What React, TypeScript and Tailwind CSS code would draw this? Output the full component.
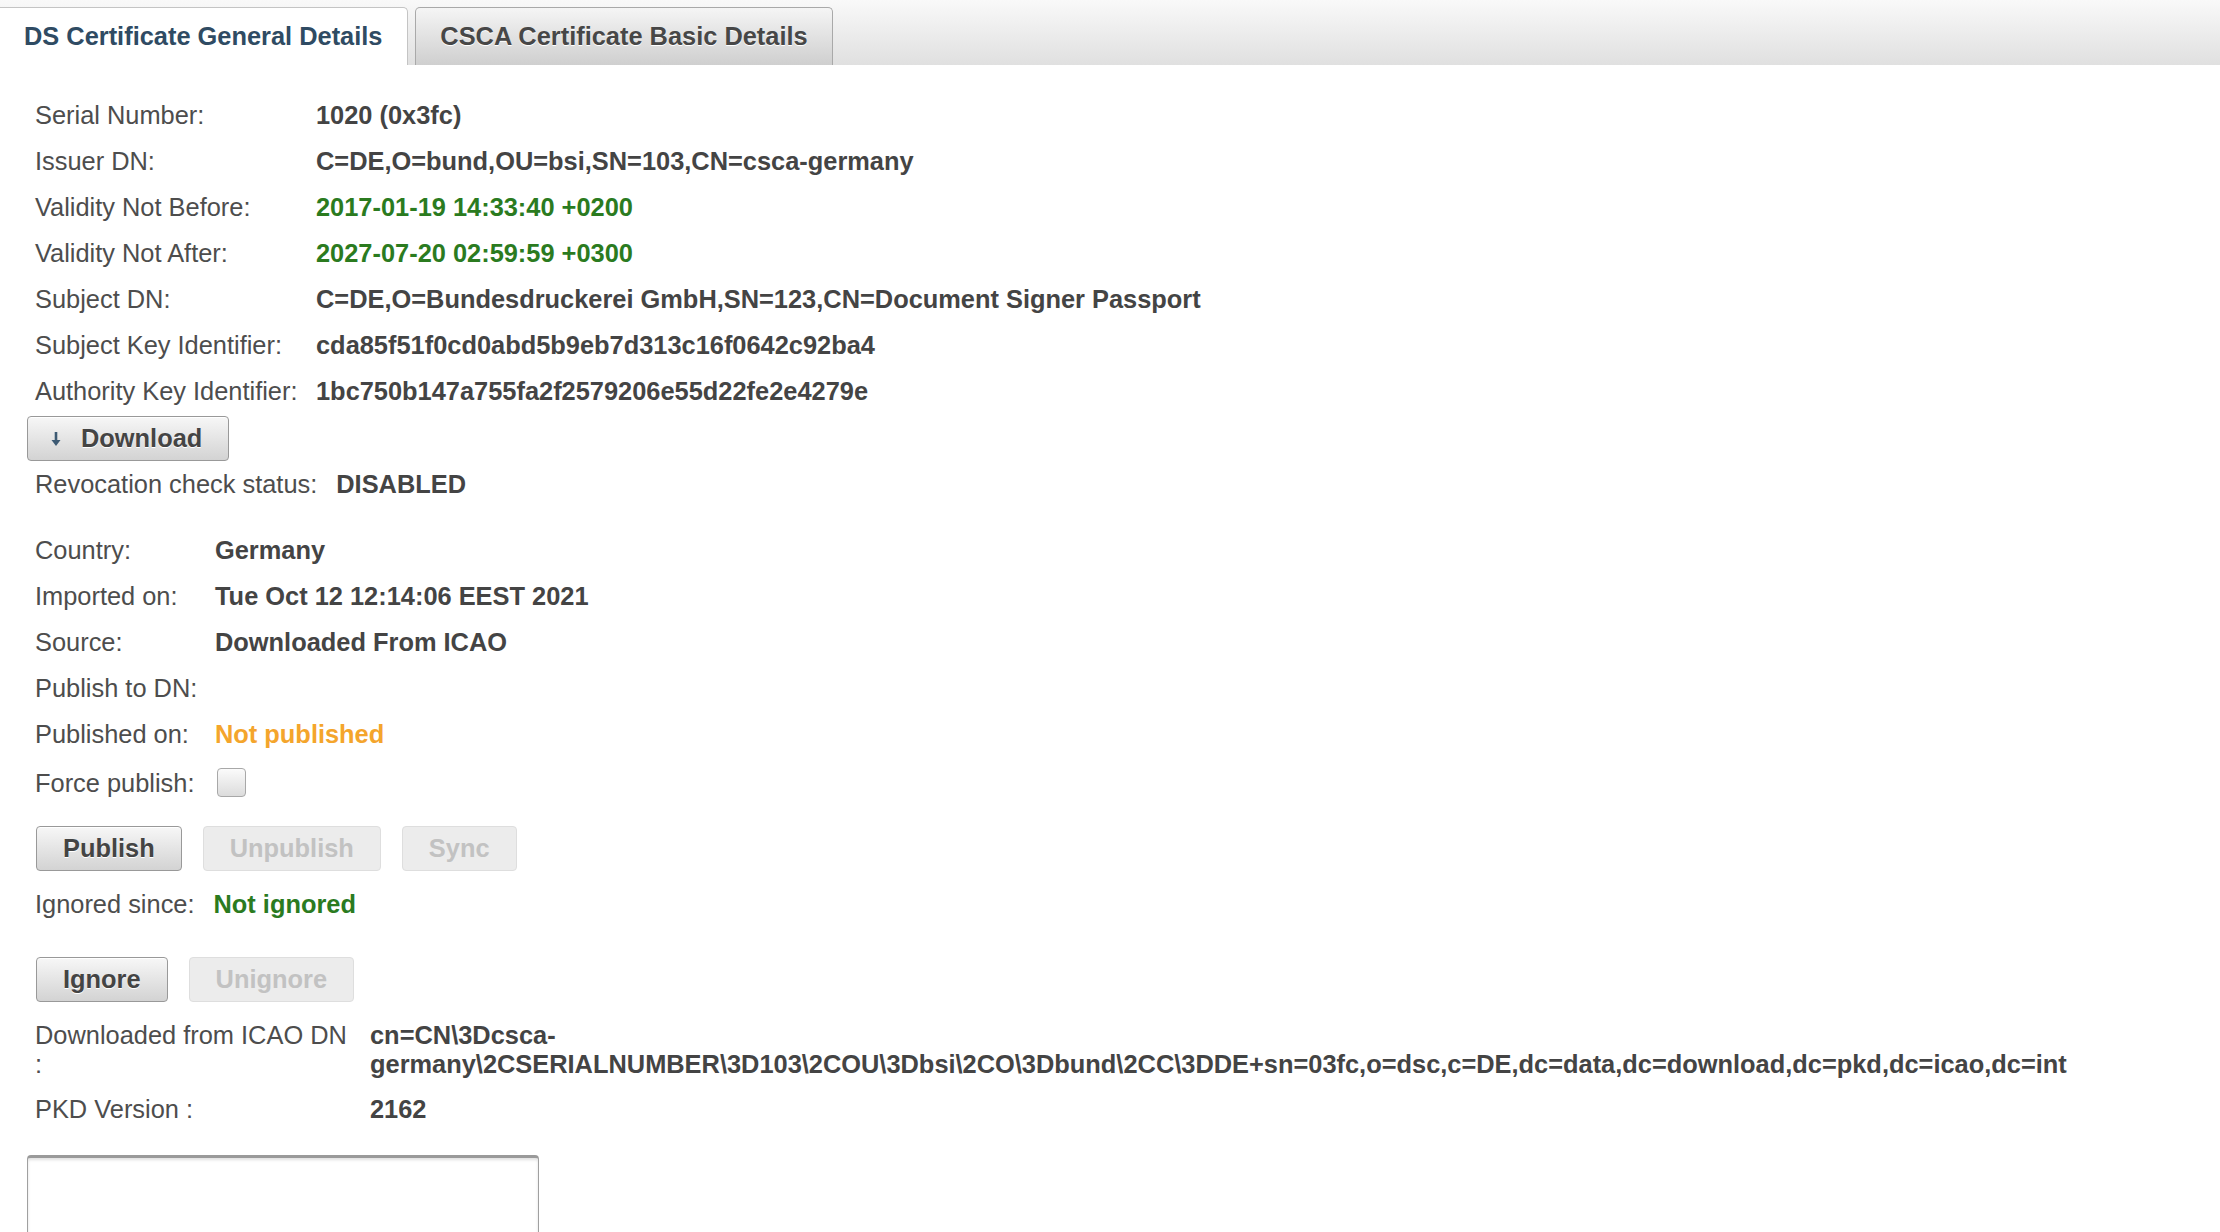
const rows1: [string, string, string?][] = [
  ['Serial Number:', '1020 (0x3fc)'],
  ['Issuer DN:', 'C=DE,O=bund,OU=bsi,SN=103,CN=csca-germany'],
  ['Validity Not Before:', '2017-01-19 14:33:40 +0200', 'green'],
  ['Validity Not After:', '2027-07-20 02:59:59 +0300', 'green'],
  ['Subject DN:', 'C=DE,O=Bundesdruckerei GmbH,SN=123,CN=Document Signer Passport'],
  ['Subject Key Identifier:', 'cda85f51f0cd0abd5b9eb7d313c16f0642c92ba4'],
  ['Authority Key Identifier:', '1bc750b147a755fa2f2579206e55d22fe2e4279e'],
]

const rows2: [string, string, string?][] = [
  ['Country:', 'Germany'],
  ['Imported on:', 'Tue Oct 12 12:14:06 EEST 2021'],
  ['Source:', 'Downloaded From ICAO'],
  ['Publish to DN:', ''],
  ['Published on:', 'Not published', 'orange'],
]

function valueClass(tone?: string) {
  if (tone === 'green') return 'font-bold text-[#2b7b1f]'
  if (tone === 'orange') return 'font-bold text-[#f4a52c]'
  return 'font-bold text-[#444]'
}

function Btn({ label, disabled }: { label: string; disabled?: boolean }) {
  return (
    <button
      disabled={disabled}
      className={
        disabled
          ? 'h-[45px] px-[26px] rounded-[4px] border border-[#dedede] bg-[#ececec] font-bold text-[#c2c2c2]'
          : 'h-[45px] px-[26px] rounded-[4px] border border-[#999] bg-gradient-to-b from-[#f7f7f7] to-[#d3d3d3] font-bold text-[#444] [text-shadow:0_1px_0_#fff] shadow-[inset_0_1px_0_#fff]'
      }
    >
      {label}
    </button>
  )
}

export default function App() {
  return (
    <div className="min-h-screen bg-white font-['Liberation_Sans',Arial,sans-serif] text-[25.4px] text-[#4d4d4d]">
      {/* tabs */}
      <div className="h-[65px] flex items-end bg-gradient-to-b from-[#f9f9f9] to-[#e0e0e0]">
        <div className="h-[58px] w-[409px] -ml-px flex items-center pl-[24px] bg-white border border-b-0 border-[#c4c4c4] rounded-tr-[5px] font-bold text-[#2f4b63]">
          DS Certificate General Details
        </div>
        <div className="ml-[7px] h-[58px] w-[418px] flex items-center justify-center border border-b-0 border-[#a9a9a9] rounded-t-[5px] bg-gradient-to-b from-[#f5f5f5] to-[#cfcfcf] font-bold text-[#474747] [text-shadow:0_1px_0_#fff]">
          CSCA Certificate Basic Details
        </div>
      </div>

      <div className="pl-[27px] pt-[27px]">
        <div className="pl-[8px] grid grid-cols-[281px_1fr]">
          {rows1.map(([k, v, tone]) => (
            <div key={k} className="contents">
              <div className="h-[46px] flex items-center">{k}</div>
              <div className={'h-[46px] flex items-center ' + valueClass(tone)}>{v}</div>
            </div>
          ))}
        </div>

        <button className="mt-[2px] h-[45px] w-[202px] flex items-center pl-[21px] rounded-[4px] border border-[#999] bg-gradient-to-b from-[#f7f7f7] to-[#d3d3d3] shadow-[inset_0_1px_0_#fff] font-bold text-[#444] [text-shadow:0_1px_0_#fff]">
          <svg width="14" height="18" viewBox="0 0 14 18" className="mr-[18px]">
            <path d="M7 2v11" stroke="#3d5a73" strokeWidth="2.6" />
            <path d="M2.5 10l4.5 6 4.5-6z" fill="#3d5a73" />
          </svg>
          Download
        </button>

        <div className="pl-[8px] h-[46px] flex items-center gap-[19px]">
          <span>Revocation check status:</span>
          <span className="font-bold text-[#444]">DISABLED</span>
        </div>

        <div className="mt-[20px] pl-[8px] grid grid-cols-[180px_1fr]">
          {rows2.map(([k, v, tone]) => (
            <div key={k} className="contents">
              <div className="h-[46px] flex items-center">{k}</div>
              <div className={'h-[46px] flex items-center ' + valueClass(tone)}>{v}</div>
            </div>
          ))}
          <div className="h-[52px] flex items-center">Force publish:</div>
          <div className="h-[52px] flex items-center">
            <span className="ml-[2px] -mt-[2px] block w-[29px] h-[29px] rounded-[4px] border border-[#a8a8a8] bg-gradient-to-b from-[#fbfbfb] to-[#dcdcdc]" />
          </div>
        </div>

        <div className="mt-[17px] pl-[9px] flex gap-[21px]">
          <Btn label="Publish" />
          <Btn label="Unpublish" disabled />
          <Btn label="Sync" disabled />
        </div>

        <div className="mt-[10px] pl-[8px] h-[46px] flex items-center gap-[19px]">
          <span>Ignored since:</span>
          <span className="font-bold text-[#2b7b1f]">Not ignored</span>
        </div>

        <div className="mt-[30px] pl-[9px] flex gap-[21px]">
          <Btn label="Ignore" />
          <Btn label="Unignore" disabled />
        </div>

        <div className="mt-[19px] pl-[8px] grid grid-cols-[318px_1fr] gap-x-[17px] leading-[29px]">
          <div>Downloaded from ICAO DN :</div>
          <div className="font-bold text-[#444] break-all">
            cn=CN\3Dcsca-
            <br />
            germany\2CSERIALNUMBER\3D103\2COU\3Dbsi\2CO\3Dbund\2CC\3DDE+sn=03fc,o=dsc,c=DE,dc=data,dc=download,dc=pkd,dc=icao,dc=int
          </div>
        </div>

        <div className="mt-[7px] pl-[8px] grid grid-cols-[318px_1fr] gap-x-[17px]">
          <div className="h-[46px] flex items-center">PKD Version :</div>
          <div className="h-[46px] flex items-center font-bold text-[#444]">2162</div>
        </div>

        <textarea className="mt-[23px] block w-[512px] h-[130px] rounded-[4px] border border-[#a0a0a0] border-t-[3px] border-t-[#9a9a9a] shadow-[inset_0_2px_3px_rgba(0,0,0,0.12)] resize-none outline-none" />
      </div>
    </div>
  )
}
